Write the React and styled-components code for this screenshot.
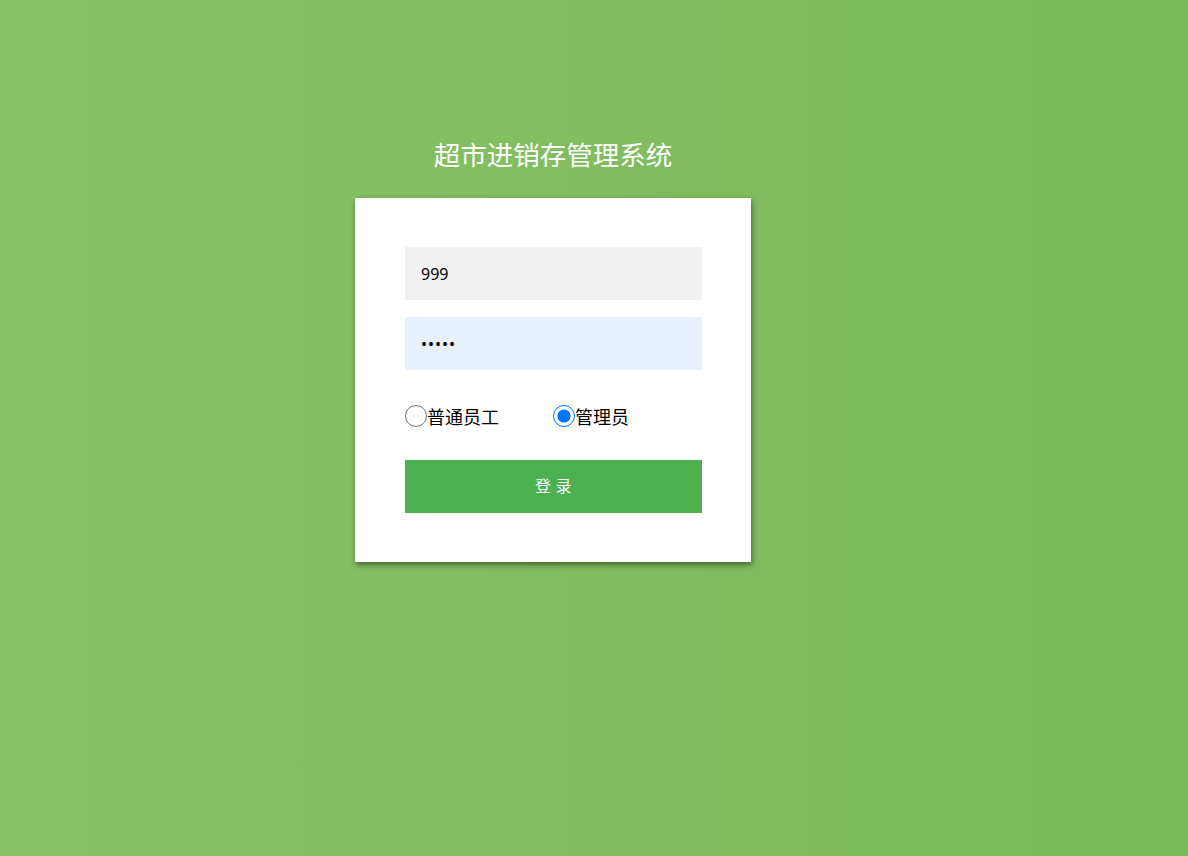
import React from 'react';
import styled, { createGlobalStyle } from 'styled-components';

const GlobalStyle = createGlobalStyle`
   html, body {
      margin: 0;
      padding: 0;
      height: 100%;
   }
   body {
      font-family: "Noto Sans", "Noto Sans CJK SC", sans-serif;
      background: linear-gradient(to right, #88c068, #7bba58);
      min-height: 856px;
   }
`;

const Page = styled.div`
   display: flex;
   flex-direction: column;
   align-items: center;
   padding: 137px 82px 0 0;
`;

const Title = styled.h1`
   margin: 0 0 27px;
   font-size: 26.5px;
   font-weight: 400;
   line-height: 34px;
   color: #fff;
   font-family: "Noto Sans CJK SC", sans-serif;
`;

const Card = styled.form`
   width: 296px;
   padding: 49px 50px;
   background: #fff;
   box-shadow: 1px 3px 6px rgba(0, 0, 0, 0.45);
   display: flex;
   flex-direction: column;
`;

const Field = styled.input`
   box-sizing: border-box;
   width: 297px;
   height: 53px;
   border: none;
   outline: none;
   padding: 0 16px;
   font-size: 16px;
   font-family: "Noto Sans", "Noto Sans CJK SC", sans-serif;
   color: #000;
   background: ${props => (props.$filled ? '#e8f0fe' : '#f1f1f1')};
   margin-bottom: ${props => props.$gap || 0}px;
   letter-spacing: ${props => (props.type === 'password' ? '1px' : '0')};
`;

const RoleRow = styled.div`
   display: flex;
   align-items: center;
   margin: 34px 0 33px;
   height: 23px;
`;

const Role = styled.label`
   display: flex;
   align-items: center;
   width: 148px;
   font-size: 18px;
   color: #000;
   font-family: "Noto Sans CJK SC", sans-serif;
   cursor: pointer;

   input {
      margin: 0;
      width: 22px;
      height: 22px;
      accent-color: #0075ff;
   }
`;

const Submit = styled.button`
   width: 297px;
   height: 53px;
   padding: 0 0 3px;
   border: none;
   background: #4caf50;
   color: #fff;
   font-size: 16px;
   letter-spacing: 0.5px;
   font-family: "Noto Sans CJK SC", sans-serif;
   cursor: pointer;
`;

export default function App() {
   return (
      <>
         <GlobalStyle />
         <Page>
            <Title>超市进销存管理系统</Title>
            <Card onSubmit={e => e.preventDefault()}>
               <Field type="text" defaultValue="999" $gap={17} autoFocus />
               <Field type="password" defaultValue="12345" $filled />
               <RoleRow>
                  <Role>
                     <input type="radio" name="role" value="staff" />
                     普通员工
                  </Role>
                  <Role>
                     <input type="radio" name="role" value="admin" defaultChecked />
                     管理员
                  </Role>
               </RoleRow>
               <Submit type="submit">登 录</Submit>
            </Card>
         </Page>
      </>
   );
}
